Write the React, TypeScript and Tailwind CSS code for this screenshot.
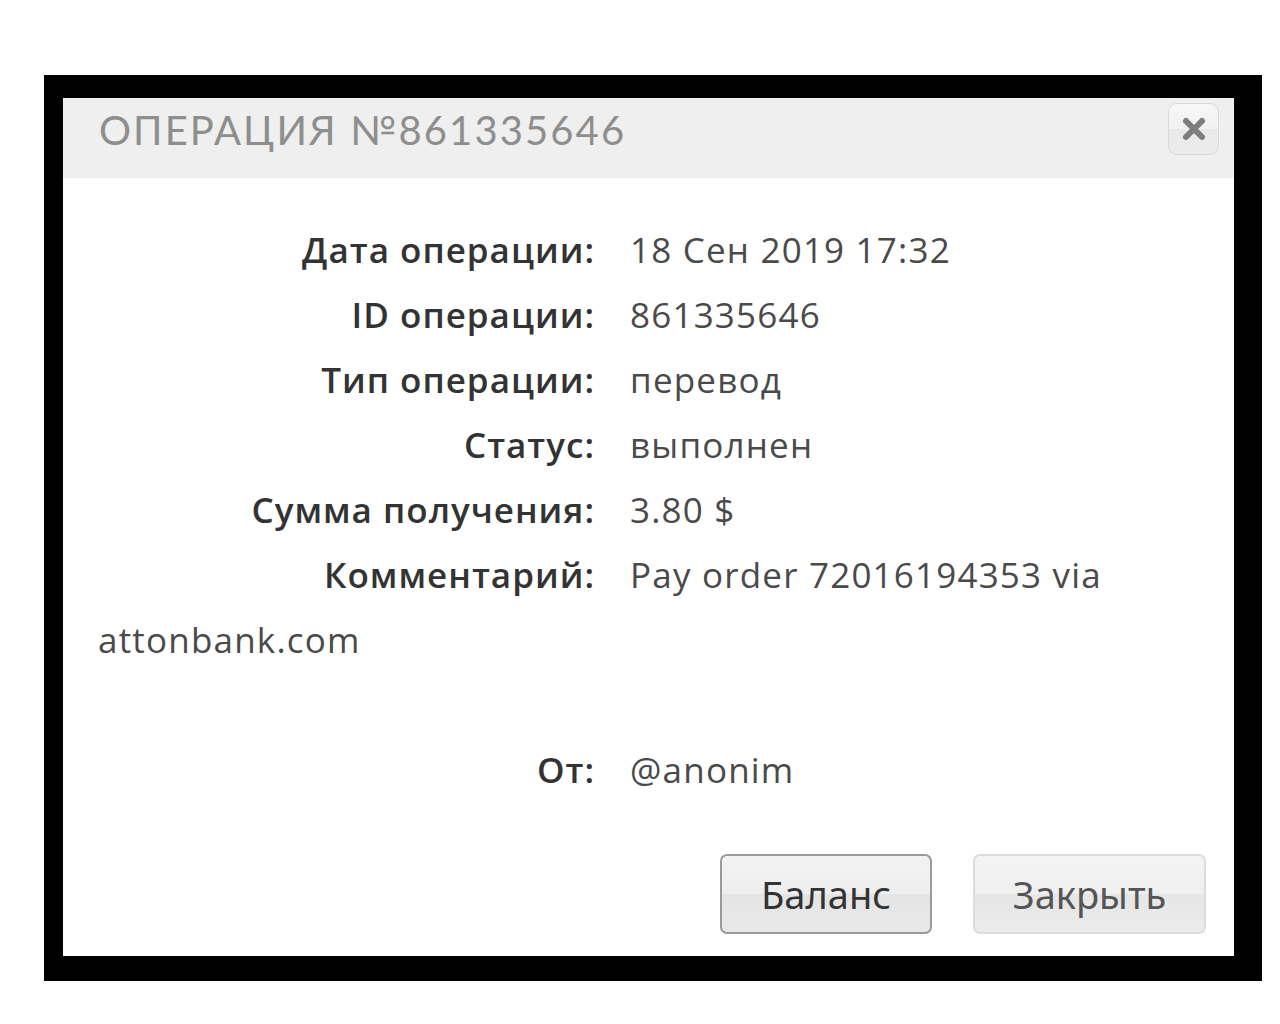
import React from "react";

const rows: { label: string; value: React.ReactNode }[] = [
  { label: "Дата операции:", value: "18 Сен 2019 17:32" },
  { label: "ID операции:", value: "861335646" },
  { label: "Тип операции:", value: "перевод" },
  { label: "Статус:", value: "выполнен" },
  { label: "Сумма получения:", value: "3.80 $" },
];

function Label({ children }: { children: React.ReactNode }) {
  return (
    <span className="inline-block w-[497px] text-right font-semibold text-[#333] mr-[35px] tracking-[1px]">
      {children}
    </span>
  );
}

export default function App() {
  return (
    <div className="min-h-[1024px] w-[1280px] bg-white pt-[75px] pl-[44px]">
      <div className="w-[1218px] h-[906px] bg-black pl-[19px] pt-[23px] pr-[28px] pb-[25px]">
        <div className="w-full h-full bg-white flex flex-col">
          <div className="h-[80px] bg-[#efefef] flex items-center justify-between pl-[36px] pr-[15px]">
            <div
              className="text-[40px] text-[#8e8e8e] tracking-[2.1px] font-normal leading-none pb-[16px]"
              style={{ fontFamily: '"Lato", "Open Sans", sans-serif' }}
            >
              ОПЕРАЦИЯ №861335646
            </div>
            <button className="self-start mt-[5px] w-[51px] h-[52px] rounded-[9px] border border-[#d8d8d8] bg-[linear-gradient(#f7f7f7_0%,#f1f1f1_50%,#e9e9e9_50%,#ececec_100%)] flex items-center justify-center">
              <svg width="24" height="24" viewBox="0 0 24 24">
                <path d="M4 4 L20 20 M20 4 L4 20" stroke="#7d7d7d" strokeWidth="6" strokeLinecap="round" />
              </svg>
            </button>
          </div>
          <div
            className="pt-[39px] pl-[35px] pr-[35px] text-[35px] leading-[65px] text-[#4a4a4a] tracking-[1.2px]"
            style={{ fontFamily: '"Open Sans", "Noto Sans", sans-serif' }}
          >
            {rows.map((r) => (
              <div key={r.label}>
                <Label>{r.label}</Label>
                <span>{r.value}</span>
              </div>
            ))}
            <div>
              <Label>Комментарий:</Label>
              <span>
                Pay order 72016194353 via
                <br />
                attonbank.com
              </span>
            </div>
            <div className="h-[65px]" />
            <div>
              <Label>От:</Label>
              <span>@anonim</span>
            </div>
          </div>
          <div className="mt-auto flex justify-end gap-[41px] pr-[28px] pb-[22px]">
            <button
              className="w-[212px] h-[80px] rounded-[7px] border-2 border-[#9a9a9a] bg-[linear-gradient(#f3f3f3_0%,#eeeeee_50%,#e4e4e4_50%,#e9e9e9_100%)] text-[38px] text-[#333]"
              style={{ fontFamily: '"Noto Sans", "Open Sans", sans-serif' }}
            >
              Баланс
            </button>
            <button
              className="w-[233px] h-[80px] rounded-[7px] border-2 border-[#dcdcdc] bg-[linear-gradient(#f4f4f4_0%,#efefef_50%,#e6e6e6_50%,#ebebeb_100%)] text-[38px] text-[#555]"
              style={{ fontFamily: '"Noto Sans", "Open Sans", sans-serif' }}
            >
              Закрыть
            </button>
          </div>
        </div>
      </div>
    </div>
  );
}
